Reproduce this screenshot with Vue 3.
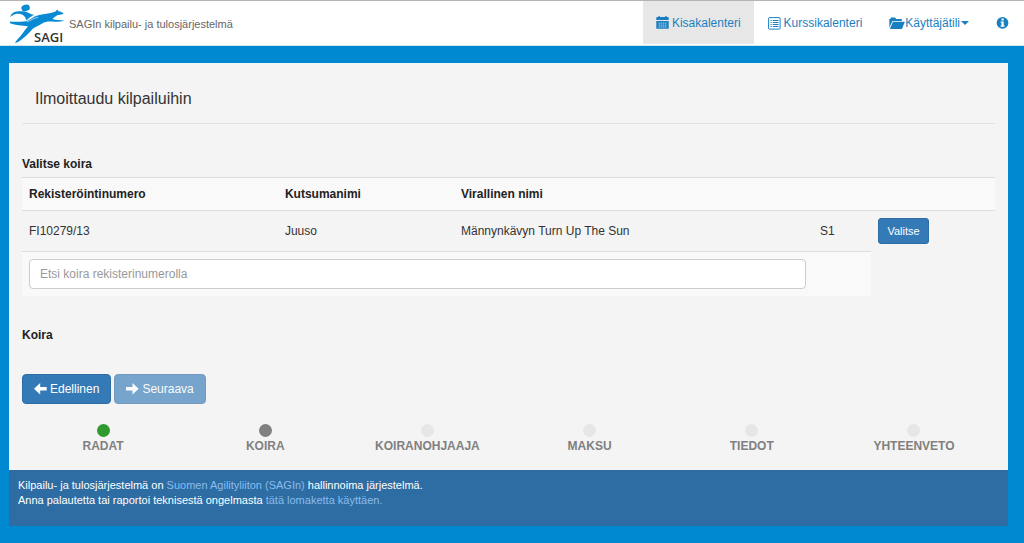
<script setup>
import { ref } from 'vue'

const search = ref('')
const dogs = [
  { reg: 'FI10279/13', call: 'Juuso', name: 'Männynkävyn Turn Up The Sun', level: 'S1' },
]
const steps = [
  { label: 'RADAT', state: 'done' },
  { label: 'KOIRA', state: 'current' },
  { label: 'KOIRANOHJAAJA', state: 'todo' },
  { label: 'MAKSU', state: 'todo' },
  { label: 'TIEDOT', state: 'todo' },
  { label: 'YHTEENVETO', state: 'todo' },
]
</script>

<template>
  <header class="topbar">
    <a class="brand" href="#">
      <svg class="logo" viewBox="0 0 56 42" role="img" aria-label="SAGI">
        <g fill="#0a8ad2">
          <ellipse cx="16.600" cy="4.900" rx="4.300" ry="3.300" transform="rotate(-15 16.600 4.900)" />
          <path d="M1 14 C2.500 10.500 5 8.500 9 8.300 C14 8 17 8.300 20 10 C22 11.200 23 12 25.500 11.600 C23 13 20 15.200 17.500 17.200 C16.500 15 16 13.500 14 12 C10 10.200 6 10.500 3.500 12.500 Z" />
          <path d="M1 18.600 C7 19 12 18.600 17 18.200 C22 16.500 24 13.500 30 12 C36 10.800 42 10.300 46.500 8.500 L48.200 6.600 L49.500 8.200 C51.500 8.500 53.500 9.300 54.800 10.700 C52 11.500 50 11.700 48.200 12.300 C46 13.600 44.500 14.800 43.500 16 C47 17.300 51 16.700 55.500 17.800 C51.500 19 47 19 43 18.600 C39.500 18.200 36.500 18.600 34 20 C30 22.500 26 24 23.500 26 C20.500 29.500 17 33 12.500 36.500 C10.500 38 8.500 39.700 6 40.200 C7 37.500 9.500 35.500 11.500 33 C14.500 29.500 16 26.500 19 23.300 C13 22.500 6.500 22.300 1 20.300 Z" />
        </g>
        <path d="M18 18.800 C21.500 17.800 24 15.300 29 14.300" fill="none" stroke="#fff" stroke-width="0.600" />
        <text class="logo-text" x="25" y="38.500">SAGI</text>
      </svg>
      <span>SAGIn kilpailu- ja tulosjärjestelmä</span>
    </a>
    <nav class="nav">
      <a class="tab active" href="#">
        <svg class="icon gap" width="13" height="13" viewBox="0 0 13 13">
          <path fill="currentColor" d="M1 1h1.5V0h1.3v1h5.4V0h1.3v1H12a.7.7 0 0 1 .7.7V4H.3V1.700A.7.7 0 0 1 1 1zM.3 5h12.400v7.200a.5.5 0 0 1-.5.5H.8a.5.5 0 0 1-.5-.5z" />
          <path stroke="#e7e7e7" stroke-width="0.5" opacity="0.6" d="M2 7.200h9M2 9.200h9M2 11h9M3.500 6v6M5.500 6v6M7.500 6v6M9.500 6v6" />
        </svg>
        Kisakalenteri
      </a>
      <a class="tab" href="#">
        <svg class="icon gap" width="13" height="13" viewBox="0 0 13 13" fill="none" stroke="currentColor">
          <rect x="0.600" y="0.600" width="11.500" height="11.500" rx="0.800" />
          <path d="M2.500 3.500h1.200M2.500 5.500h1.200M2.500 7.500h1.200M2.500 9.500h1.200M4.800 3.500h5.700M4.800 5.500h5.700M4.800 7.500h5.700M4.800 9.500h5.700" />
        </svg>
        Kurssikalenteri
      </a>
      <a class="tab" href="#">
        <svg class="icon" width="16" height="13" viewBox="0 0 16 13" fill="currentColor">
          <path d="M.3 10.500V2h1L2 .5h4.300L7 2h5.800v1.900H3.500z" />
          <path d="M4 4.700H15.900L12.900 12H.8z" />
        </svg>
        <span>Käyttäjätili</span>
        <span class="caret"></span>
      </a>
      <a class="tab" href="#" aria-label="Tietoja">
        <svg class="icon" width="13" height="13" viewBox="0 0 13 13">
          <circle cx="6.500" cy="5.900" r="5.900" fill="currentColor" />
          <path fill="#fff" d="M5.500 1.600h2.200v1.800H5.500zM4.700 4.600h3v3.900h.9v1.200H4.600V8.500h.9V5.800h-.8z" />
        </svg>
      </a>
    </nav>
  </header>

  <div class="page">
    <main class="panel">
      <h1>Ilmoittaudu kilpailuihin</h1>

      <h2 id="choose">Valitse koira</h2>
      <table aria-labelledby="choose">
        <colgroup>
          <col class="c-reg" /><col class="c-call" /><col class="c-name" /><col class="c-level" /><col />
        </colgroup>
        <thead>
          <tr class="striped">
            <th>Rekisteröintinumero</th>
            <th>Kutsumanimi</th>
            <th>Virallinen nimi</th>
            <td></td>
            <td></td>
          </tr>
        </thead>
        <tbody>
          <tr v-for="dog in dogs" :key="dog.reg">
            <td>{{ dog.reg }}</td>
            <td>{{ dog.call }}</td>
            <td>{{ dog.name }}</td>
            <td>{{ dog.level }}</td>
            <td><button type="button" class="btn small">Valitse</button></td>
          </tr>
          <tr class="find">
            <td colspan="3">
              <input v-model="search" type="text" aria-label="Etsi koira rekisterinumerolla" placeholder="Etsi koira rekisterinumerolla" />
            </td>
            <td></td>
          </tr>
        </tbody>
      </table>

      <h2 class="dog-title">Koira</h2>

      <div class="actions">
        <button type="button" class="btn">
          <svg width="13" height="12" viewBox="0 0 13 12" fill="currentColor"><path d="M0 5.700L6.200 0v3.900h6.500v3.600H6.200v3.900z" /></svg>
          Edellinen
        </button>
        <button type="button" class="btn" disabled>
          <svg width="13" height="12" viewBox="0 0 13 12" fill="currentColor"><path d="M12.700 5.700L6.500 0v3.900H0v3.600h6.500v3.900z" /></svg>
          Seuraava
        </button>
      </div>

      <ol class="steps">
        <li v-for="step in steps" :key="step.label">
          <span class="dot" :class="step.state"></span>
          {{ step.label }}
        </li>
      </ol>
    </main>
    <footer>
      <p>Kilpailu- ja tulosjärjestelmä on <a href="#">Suomen Agilityliiton (SAGIn)</a> hallinnoima järjestelmä.</p>
      <p>Anna palautetta tai raportoi teknisestä ongelmasta <a href="#">tätä lomaketta käyttäen.</a></p>
    </footer>
  </div>
</template>

<style>
body {
  background: #0089d1;
  color: #333;
  font-family: "Liberation Sans", Arial, sans-serif;
  font-size: 12px;
  line-height: 18px;
}
</style>

<style scoped>
.topbar {
  display: flex;
  justify-content: space-between;
  height: 44px;
  background: #fff;
  border-top: 1px solid #b4b4b4;
  border-bottom: 1px solid #cfe5f2;
}
.brand {
  display: flex;
  align-items: center;
  gap: 4px;
  padding-left: 9px;
  color: #666;
  font-size: 11px;
  text-decoration: none;
}
.brand span { padding-top: 2px; }
.logo { width: 56px; height: 42px; margin-top: 2px; }
.logo-text {
  font-family: "Open Sans", sans-serif;
  font-size: 13px;
  font-weight: 600;
  fill: #333;
}
.nav {
  display: flex;
  gap: 1px;
  padding-right: 2px;
}
.tab {
  display: flex;
  align-items: center;
  padding: 0 13px;
  color: #1a7fc0;
  text-decoration: none;
}
.tab.active { background: #e7e7e7; margin-bottom: 1px; }
.icon { flex: none; }
.gap { margin-right: 3px; }
.caret {
  margin-left: 1px;
  border: 4px solid transparent;
  border-top-color: currentColor;
  border-bottom: 0;
}
.page { margin: 17px 16px 17px 9px; }
.panel { padding: 13px 13px 15px; background: #f4f4f4; }
h1 {
  margin: 0;
  padding: 13px 13px 14px;
  border-bottom: 1px solid #e3e3e3;
  font-size: 16px;
  font-weight: 400;
  line-height: 20px;
}
h2 {
  margin: 31px 0 4px;
  color: #222;
  font-size: 12px;
  font-weight: 700;
}
table {
  width: 100%;
  table-layout: fixed;
  border-collapse: collapse;
}
.c-reg { width: 26.300%; }
.c-call { width: 18.100%; }
.c-name { width: 36.900%; }
.c-level { width: 6%; }
th, td {
  padding: 7px;
  border-top: 1px solid #ddd;
  text-align: left;
}
th { color: #222; }
.striped { background: #f9f9f9; }
.find td { background: #f9f9f9; }
input {
  display: block;
  box-sizing: border-box;
  width: 100%;
  height: 30px;
  padding: 0 10px;
  border: 1px solid #ccc;
  border-radius: 4px;
  background: #fff;
  color: #555;
  font: inherit;
}
input::placeholder { color: #999; opacity: 1; }
.btn {
  display: inline-flex;
  align-items: center;
  gap: 3px;
  height: 30px;
  padding: 0 11px;
  border: 1px solid #2e6da4;
  border-radius: 4px;
  background: #337ab7;
  color: #fff;
  font: inherit;
}
.btn:disabled { opacity: 0.65; }
.btn.small {
  display: block;
  height: 26px;
  padding: 0 8px;
  border-radius: 3px;
  font-size: 11px;
}
.dog-title { margin: 30px 0; }
.actions { display: flex; gap: 3px; }
.steps {
  display: flex;
  margin: 20px 0 0;
  padding: 0;
  list-style: none;
  color: #808080;
  font-weight: 700;
}
.steps li {
  display: flex;
  flex: 1;
  flex-direction: column;
  align-items: center;
}
.dot { width: 13px; height: 13px; border-radius: 50%; }
.done { background: #2f9a2f; }
.current { background: #808080; }
.todo { background: #e6e6e6; }
footer {
  padding: 8px 9px 18px;
  background: #2e6da4;
  color: #fff;
  font-size: 11px;
  line-height: 15px;
}
footer p { margin: 0; }
footer a { color: #8abcec; text-decoration: none; }
</style>
